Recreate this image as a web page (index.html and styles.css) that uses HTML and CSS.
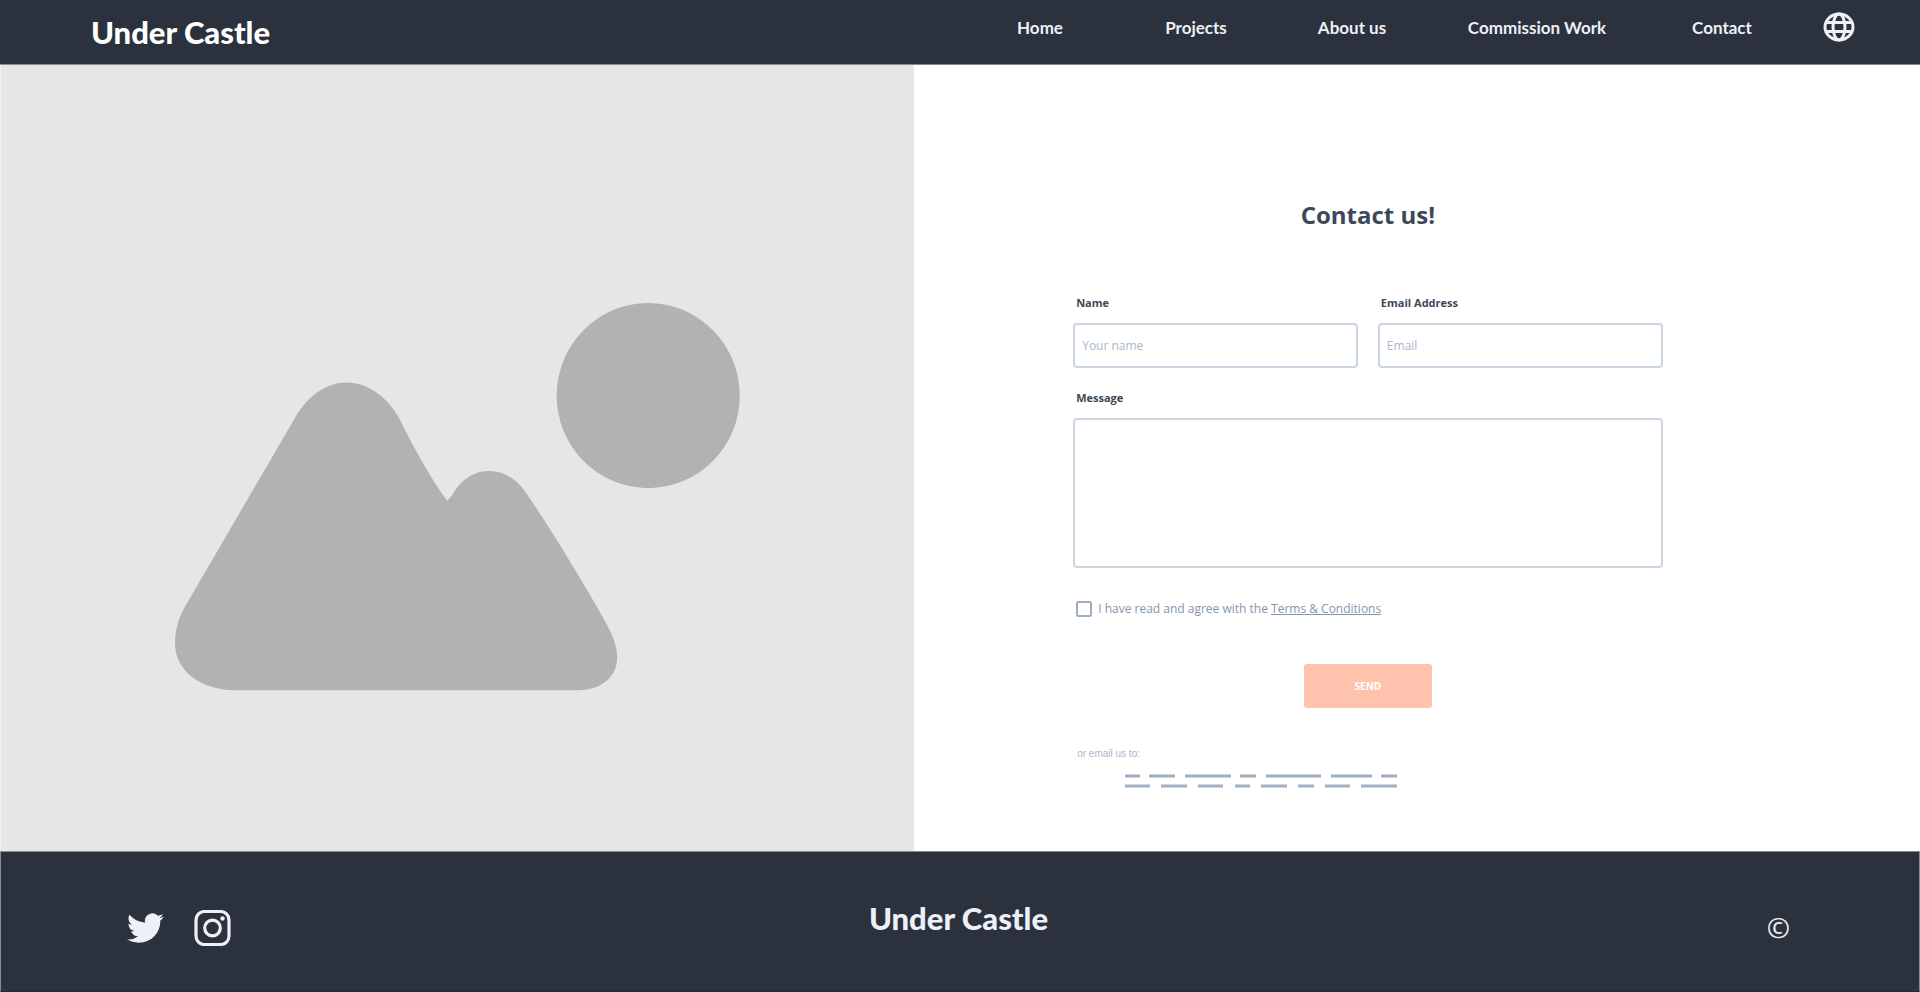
FILE: index.html
```html
<!DOCTYPE html>
<html lang="en">
<head>
<meta charset="utf-8">
<title>Under Castle - Contact</title>
<link rel="stylesheet" href="styles.css">
</head>
<body>
<header class="site-header">
  <a class="brand" href="#">Under Castle</a>
  <nav class="nav">
    <a class="nav-link" href="#">Home</a>
    <a class="nav-link" href="#">Projects</a>
    <a class="nav-link" href="#">About us</a>
    <a class="nav-link nav-link-wide" href="#">Commission Work</a>
    <a class="nav-link" href="#">Contact</a>
  </nav>
  <button class="language" type="button" aria-label="Language">
    <svg class="globe" viewBox="0 0 32 30" fill="none" stroke="currentColor" stroke-width="3">
      <ellipse cx="16" cy="15" rx="14" ry="13"/>
      <ellipse cx="16" cy="15" rx="6" ry="13"/>
      <path d="M3 10.5h26M3 19.500h26"/>
    </svg>
  </button>
</header>
<main class="main">
  <div class="picture">
    <svg class="landscape" viewBox="1 65 913 786" fill="#b2b2b2">
      <ellipse cx="648" cy="395.500" rx="91.500" ry="92.500"/>
      <path d="M296 416C308 396 326 382.500 346.500 382.500C368 382.500 387 397 399 418C407 434 414 448 423 463.500C431 477 438 489 447 500.500C451 497 453 493 456 488.500C465 477 476 471 489 471C503 471 515 478 524 490C539 512 554 535 569 560C582 581 595 603 607 625C613 636 617 647 617 657C617 677 601 690 577 690H236C201 690 175 671 175 643C175 631 178 619 184 608Z"/>
    </svg>
  </div>
  <section class="contact">
    <form class="form">
      <h1 class="title">Contact us!</h1>
      <div class="row">
        <div class="field">
          <label class="label" for="name">Name</label>
          <input class="input" id="name" type="text" placeholder="Your name">
        </div>
        <div class="field">
          <label class="label" for="email">Email Address</label>
          <input class="input" id="email" type="email" placeholder="Email">
        </div>
      </div>
      <div class="field">
        <label class="label" for="message">Message</label>
        <textarea class="input message" id="message"></textarea>
      </div>
      <div class="terms">
        <input class="checkbox" id="agree" type="checkbox">
        <label for="agree">I have read and agree with the <a class="terms-link" href="#">Terms &amp; Conditions</a></label>
      </div>
      <button class="send" type="submit">SEND</button>
      <p class="hint">or email us to:</p>
      <svg class="address" viewBox="0 0 274 14" fill="none" stroke="#a0afc4" stroke-width="3">
        <path d="M1 2h15M25 2h26M61 2h46M116 2h16M142 2h55M207 2h41M257 2h16"/>
        <path d="M1 12h25M37 12h26M74 12h25M111 12h15M137 12h26M174 12h16M201 12h25M237 12h36"/>
      </svg>
    </form>
  </section>
</main>
<footer class="site-footer">
  <div class="social">
    <a href="#" aria-label="Twitter">
      <svg class="social-icon" viewBox="0 0 24 24" preserveAspectRatio="none" fill="currentColor">
        <path d="M23.950 4.570a10 10 0 0 1-2.820.770 4.960 4.960 0 0 0 2.160-2.720c-.950.550-2 .960-3.130 1.180a4.920 4.920 0 0 0-8.380 4.480C7.690 8.090 4.070 6.130 1.640 3.160a4.820 4.820 0 0 0-.670 2.480c0 1.710.870 3.210 2.190 4.100a4.900 4.900 0 0 1-2.230-.620v.060a4.920 4.920 0 0 0 3.950 4.830 5 5 0 0 1-2.210.080 4.940 4.940 0 0 0 4.600 3.420A9.870 9.870 0 0 1 0 19.540a13.990 13.990 0 0 0 7.550 2.210c9.050 0 14-7.500 14-13.980 0-.210 0-.420-.020-.630a9.940 9.940 0 0 0 2.420-2.570z"/>
      </svg>
    </a>
    <a href="#" aria-label="Instagram">
      <svg class="social-icon" viewBox="0 0 36 36" fill="none" stroke="currentColor">
        <rect x="1.500" y="1.500" width="33" height="33" rx="8.500" stroke-width="3.200"/>
        <circle cx="18" cy="18" r="7.800" stroke-width="3.200"/>
        <circle cx="28" cy="8.500" r="2.200" fill="currentColor" stroke="none"/>
      </svg>
    </a>
  </div>
  <a class="brand brand-footer" href="#">Under Castle</a>
  <span class="copyright">©</span>
</footer>
</body>
</html>
```
FILE: styles.css
```css
* {
  box-sizing: border-box;
}

body {
  margin: 0;
  min-height: 100vh;
  display: flex;
  flex-direction: column;
  background: #fff;
  color: #3c4858;
  font-family: "Open Sans", sans-serif;
}

a {
  color: inherit;
  text-decoration: none;
}

.site-header {
  display: flex;
  align-items: flex-start;
  padding: 12px 65px 12px 91px;
  border-bottom: 1px solid #858b92;
  background: #2b323e;
  color: #edf0f6;
}

.brand {
  color: #fff;
  font-family: Lato, sans-serif;
  font-size: 31px;
  font-weight: 900;
  line-height: 40px;
}

.nav {
  display: flex;
  margin-left: auto;
}

.nav-link {
  width: 156px;
  font-family: Lato, sans-serif;
  font-size: 17px;
  font-weight: 700;
  line-height: 32px;
  text-align: center;
}

.nav-link-wide {
  width: 214px;
}

.language {
  margin: 0 0 0 23px;
  padding: 0;
  border: 0;
  background: none;
  color: inherit;
}

.globe {
  display: block;
  width: 32px;
  height: 30px;
}

.main {
  flex: 1;
  display: grid;
  grid-template-columns: 10fr 11fr;
}

.picture {
  border-left: 1px solid #f2f2f2;
  background: #e6e6e6;
}

.landscape {
  display: block;
  width: 100%;
}

.contact {
  padding: 132px 25.600% 0 15.800%;
}

.form {
  display: flex;
  flex-direction: column;
}

.title {
  margin: 0 0 62px;
  font-size: 24px;
  font-weight: 700;
  line-height: 36px;
  text-align: center;
}

.row {
  display: grid;
  grid-template-columns: 1fr 1fr;
  gap: 20px;
  margin-bottom: 22px;
}

.field {
  display: flex;
  flex-direction: column;
  gap: 12px;
}

.label {
  padding-left: 3px;
  font-size: 11px;
  font-weight: 700;
  line-height: 16px;
}

.input {
  width: 100%;
  height: 45px;
  margin: 0;
  padding: 0 7px;
  border: 2px solid #cbd6e2;
  border-radius: 4px;
  background: #fff;
  color: #3c4858;
  font-family: inherit;
  font-size: 12px;
}

.input::placeholder {
  color: #aab8ca;
  opacity: 1;
}

.message {
  height: 150px;
  padding: 8px;
  resize: none;
}

.terms {
  display: flex;
  align-items: center;
  gap: 6px;
  margin: 32px 0 0 3px;
  color: #8396ad;
  font-size: 12px;
  line-height: 18px;
}

.checkbox {
  appearance: none;
  width: 16px;
  height: 16px;
  margin: 0;
  border: 2px solid #a0afc4;
  border-radius: 2px;
}

.terms-link {
  text-decoration: underline;
}

.send {
  align-self: center;
  width: 128px;
  height: 44px;
  margin: 46px 0 38px;
  border: 0;
  border-radius: 3px;
  background: #ffc2ad;
  color: #fff;
  font-family: inherit;
  font-size: 10px;
  font-weight: 700;
}

.hint {
  margin: 0 0 12px 4px;
  color: #a9b7ca;
  font-family: "Liberation Sans", sans-serif;
  font-size: 10px;
  line-height: 16px;
}

.address {
  width: 274px;
  height: 14px;
  margin-left: 51px;
}

.site-footer {
  display: grid;
  grid-template-columns: 1fr auto 1fr;
  align-items: start;
  padding: 46px 129px 44px 126px;
  border: 1px solid #858b92;
  border-bottom-color: #222b38;
  background: #2b323e;
  color: #edf0f6;
}

.social {
  display: flex;
  gap: 30px;
  padding-top: 12px;
}

.social-icon {
  display: block;
  width: 37px;
  height: 36px;
}

.brand-footer {
  color: #edf0f6;
}

.copyright {
  justify-self: end;
  padding-top: 9px;
  font-size: 28px;
  line-height: 40px;
}
```
